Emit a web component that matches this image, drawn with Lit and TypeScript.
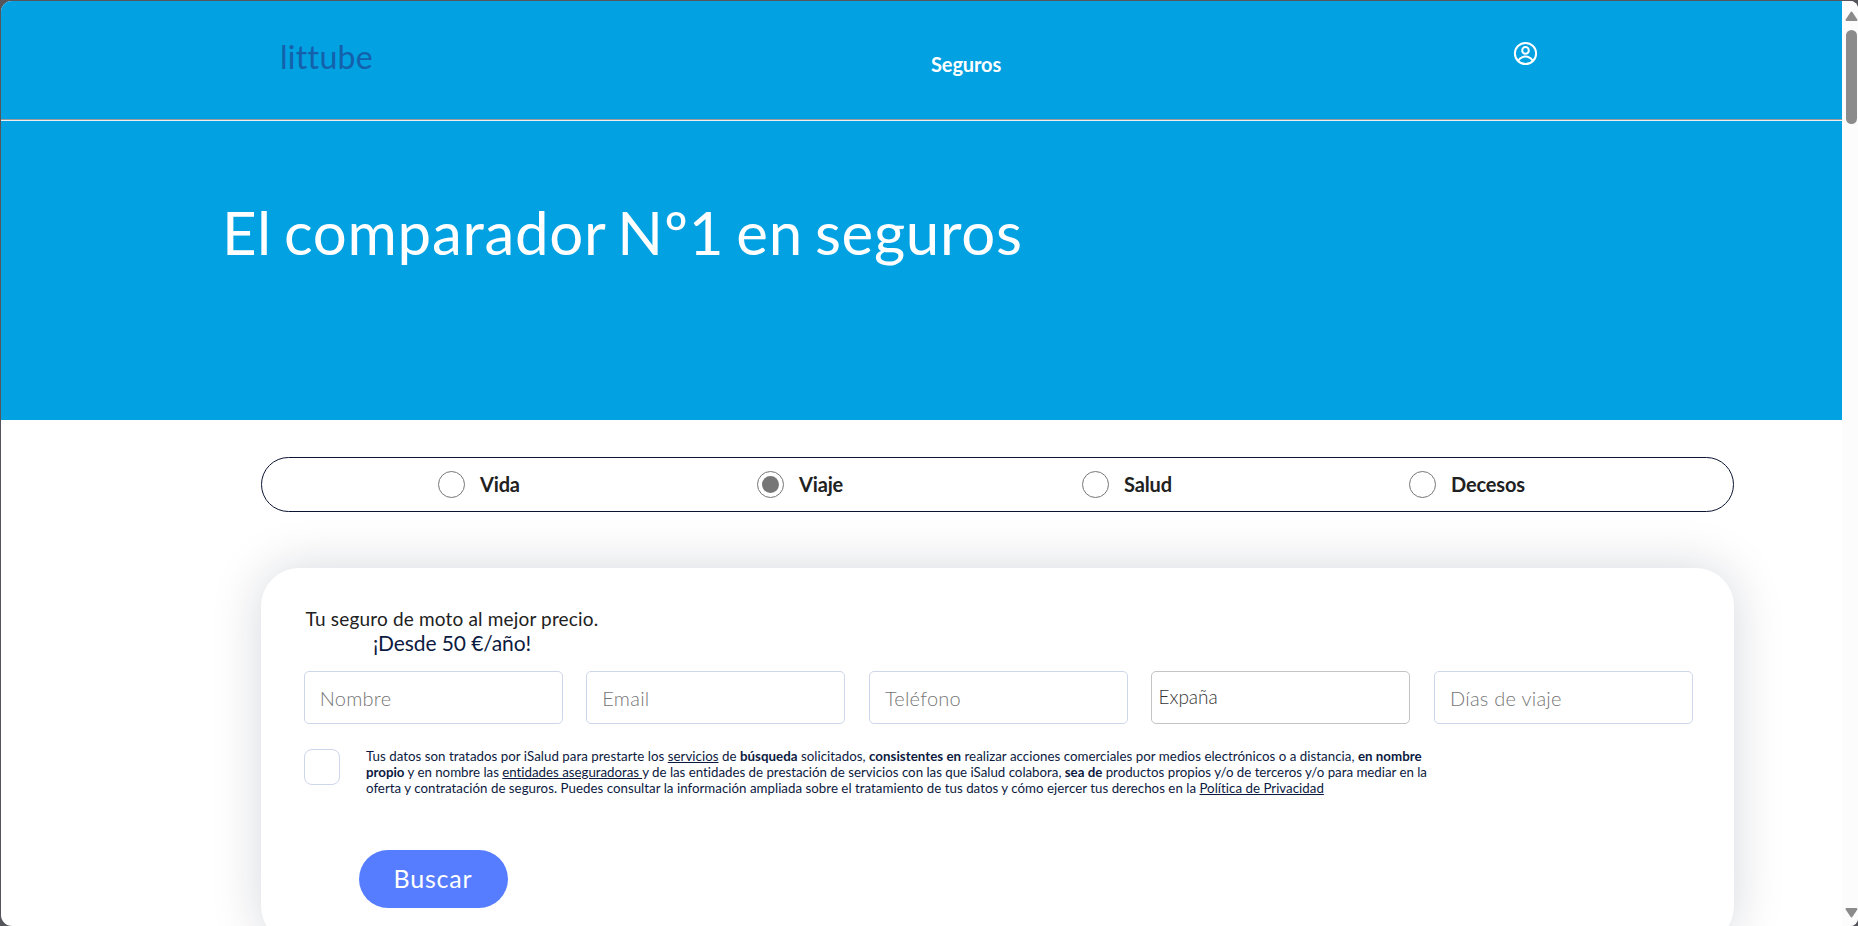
import { LitElement, html, css } from "lit";
import { customElement, state } from "lit/decorators.js";
import { classMap } from "lit/directives/class-map.js";

@customElement("app-root")
class AppRoot extends LitElement {
  @state() private selected = "Viaje";

  static styles = css`
    :host { display: block; width: 1858px; height: 926px; overflow: hidden; background: #55565b; font-family: Lato, sans-serif; font-variant-ligatures: none; color: #212121; }
    * { box-sizing: border-box; }
    .window { display: flex; width: 1857px; height: 925px; margin: 1px 0 0 1px; border-radius: 11px 8px 8px 11px; overflow: hidden; background: #fff; }
    .page { width: 1841px; height: 925px; overflow: hidden; flex: none; }
    .top { height: 118px; background: #02a1e2; display: flex; align-items: flex-start; padding-left: 279px; color: #fff; }
    .logo { width: 649px; padding-top: 37px; font-size: 32px; line-height: 38px; color: #1460aa; letter-spacing: .3px; }
    .nav { width: 584px; padding-top: 51px; padding-left: 2px; font-size: 20px; line-height: 24px; font-weight: 700; letter-spacing: -.12px; }
    .user { display: block; margin-top: 40px; width: 25px; height: 25px; }
    .rule { height: 2px; border-top: 1px solid #9a9a9a; border-bottom: 1px solid #eee; }
    .hero { height: 299px; background: #02a1e2; color: #fff; padding: 75px 0 0 221px; }
    .title { margin: 0; font-size: 60px; line-height: 72px; font-weight: 400; white-space: nowrap; letter-spacing: .7px; word-spacing: -4px; }
    .kinds { margin: 37px 0 0 260px; width: 1473px; height: 55px; border: 1px solid #0b1533; border-radius: 28px; display: flex; align-items: center; padding-left: 176px; }
    .kind { display: flex; align-items: center; gap: 15px; font-size: 20px; line-height: 24px; font-weight: 700; letter-spacing: -.15px; }
    .kind:nth-child(1) { width: 319px; }
    .kind:nth-child(2) { width: 325px; }
    .kind:nth-child(3) { width: 327px; }
    .name { margin-top: -2px; }
    .dot { width: 27px; height: 27px; border-radius: 50%; border: 1px solid #767676; display: grid; place-items: center; margin-top: -1px; }
    .on::after { content: ""; width: 17px; height: 17px; border-radius: 50%; background: #767676; }
    .card { margin: 56px 0 0 260px; width: 1473px; height: 376px; border-radius: 38px; box-shadow: 0 0 50px rgba(11, 24, 51, .17); background: #fff; padding: 38px 39px 0 43px; }
    .lead { width: 294px; text-align: center; white-space: nowrap; margin-left: 1px; }
    .lead1 { font-size: 19px; line-height: 26px; letter-spacing: .17px; }
    .lead2 { font-size: 21px; line-height: 22px; padding-bottom: 2px; color: #0c1a41; letter-spacing: -.1px; }
    .fields { display: grid; grid-template-columns: repeat(5, 259px); gap: 23.55px; margin-top: 15px; margin-left: -.2px; }
    .field { width: 259px; height: 53px; border: 1px solid #cdd6ea; border-radius: 5px; padding: 0 15px; font: 300 20px Lato, sans-serif; letter-spacing: .25px; color: #333; background: #fff; outline: none; }
    .field::placeholder { color: #757575; opacity: 1; }
    .country { border-color: #c4c4c4; padding: 0 6px; font-size: 19px; line-height: 50px; letter-spacing: 0; }
    .consent { display: flex; margin-top: 24px; gap: 26px; align-items: flex-start; }
    .check { width: 36px; height: 36px; margin-top: 1px; border: 1px solid #cdd6ea; border-radius: 8px; flex: none; }
    .legal { margin: 0; font-size: 13.3px; line-height: 16px; color: #0c1a41; white-space: nowrap; }
    .line { display: block; letter-spacing: .02px; }
    .line:nth-child(1) { letter-spacing: .03px; }
    .line:nth-child(2) { letter-spacing: -.015px; }
    .link { text-decoration: underline; }
    .send { display: block; margin: 54px 0 0 55px; width: 149px; height: 58px; border: 0; border-radius: 29px; background: #567dff; color: #fff; font: 400 25px Lato, sans-serif; letter-spacing: .8px; padding: 0 1px 2px 0; }
    .scroll { width: 16px; height: 925px; background: #fcfcfc; display: flex; flex-direction: column; align-items: flex-start; padding: 9px 0 7px 3px; }
    .arrow { display: block; width: 13px; height: 12px; flex: none; }
    .thumb { width: 11px; height: 94px; margin: 8px 0 auto 1px; border-radius: 6px; background: #8b8b8b; }
  `;

  private field(label: string) {
    return html`<input class="field" type="text" placeholder=${label} aria-label=${label} />`;
  }

  render() {
    return html`
      <div class="window">
        <div class="page">
          <header class="top">
            <div class="logo">littube</div>
            <div class="nav">Seguros</div>
            <svg class="user" viewBox="0 0 25 25" fill="none" stroke="#fff" stroke-width="2">
              <circle cx="12.5" cy="12.5" r="10.6" />
              <circle cx="12.5" cy="9.4" r="3.3" />
              <path d="M5.3 19.8C7.2 17 9.6 15.6 12.5 15.6s5.3 1.4 7.2 4.2" />
            </svg>
          </header>
          <div class="rule"></div>
          <section class="hero"><h1 class="title">El comparador Nº1 en seguros</h1></section>
          <div class="kinds">
            ${["Vida", "Viaje", "Salud", "Decesos"].map(
              (k) => html`<div class="kind" @click=${() => (this.selected = k)}>
                <span class=${classMap({ dot: true, on: this.selected === k })}></span><span class="name">${k}</span>
              </div>`
            )}
          </div>
          <section class="card">
            <div class="lead">
              <div class="lead1">Tu seguro de moto al mejor precio.</div>
              <div class="lead2">¡Desde 50 €/año!</div>
            </div>
            <div class="fields">
              ${this.field("Nombre")}${this.field("Email")}${this.field("Teléfono")}
              <div class="field country">Expaña</div>
              ${this.field("Días de viaje")}
            </div>
            <div class="consent">
              <span class="check"></span>
              <p class="legal">
                <span class="line">Tus datos son tratados por iSalud para prestarte los <span class="link">servicios</span> de <b>búsqueda</b> solicitados, <b>consistentes en</b> realizar acciones comerciales por medios electrónicos o a distancia, <b>en nombre</b></span>
                <span class="line"><b>propio</b> y en nombre las <span class="link">entidades aseguradoras </span>y de las entidades de prestación de servicios con las que iSalud colabora, <b>sea de</b> productos propios y/o de terceros y/o para mediar en la</span>
                <span class="line">oferta y contratación de seguros. Puedes consultar la información ampliada sobre el tratamiento de tus datos y cómo ejercer tus derechos en la <span class="link">Política de Privacidad</span></span>
              </p>
            </div>
            <button class="send">Buscar</button>
          </section>
        </div>
        <div class="scroll">
          <svg class="arrow" viewBox="0 0 13 12"><path d="M6.5 2.5 11.5 10H1.5Z" fill="#8b8b8b" stroke="#8b8b8b" stroke-width="2" stroke-linejoin="round" /></svg>
          <div class="thumb"></div>
          <svg class="arrow" viewBox="0 0 13 12"><path d="M6.5 9.5 11.5 2H1.5Z" fill="#8b8b8b" stroke="#8b8b8b" stroke-width="2" stroke-linejoin="round" /></svg>
        </div>
      </div>
    `;
  }
}
